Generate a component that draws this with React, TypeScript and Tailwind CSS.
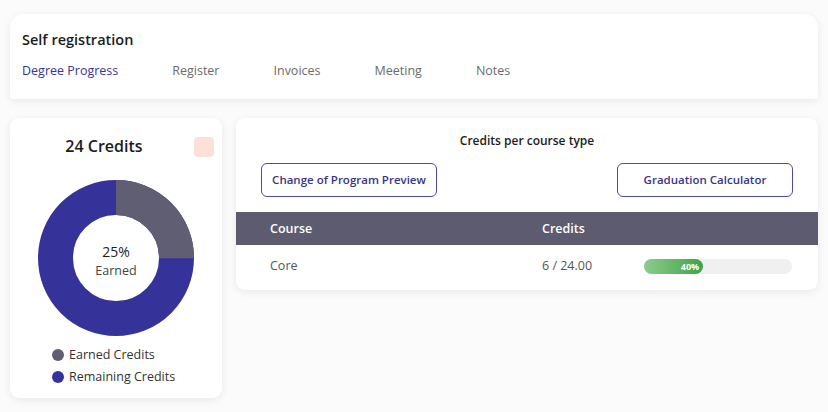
const TABS = ["Degree Progress", "Register", "Invoices", "Meeting", "Notes"];

function Donut() {
  const r = 60.5;
  const c = 2 * Math.PI * r;
  return (
    <svg width="156" height="156" viewBox="0 0 156 156">
      <g transform="rotate(-90 78 78)">
        <circle cx="78" cy="78" r={r} fill="none" stroke="#35329a" strokeWidth="35" />
        <circle
          cx="78"
          cy="78"
          r={r}
          fill="none"
          stroke="#5f5e73"
          strokeWidth="35"
          strokeDasharray={`${c * 0.25} ${c}`}
        />
      </g>
    </svg>
  );
}

export default function App() {
  return (
    <div
      className="w-[828px] h-[412px] bg-[#fbfbfb] px-[10px] pt-[14px] overflow-hidden text-[#222]"
      style={{ fontFamily: '"Open Sans", "Noto Sans", sans-serif' }}
    >
      {/* Header */}
      <div className="h-[85px] bg-white rounded-t-[14px] rounded-b-[3px] shadow-[0_2px_8px_rgba(0,0,0,0.08)] px-[12px] pt-[16px]">
        <h1 className="text-[14.5px] font-semibold leading-5 text-[#1c1c1c]">Self registration</h1>
        <div className="flex gap-[54px] mt-[13px] text-[12.5px] leading-4 text-[#6b6b6b]">
          {TABS.map((t, i) => (
            <span key={t} className={i === 0 ? "text-[#3b3590]" : ""}>
              {t}
            </span>
          ))}
        </div>
      </div>

      <div className="flex items-start gap-[14px] mt-[19px]">
        {/* Credits donut card */}
        <div className="w-[212px] h-[280px] bg-white rounded-[9px] shadow-[0_2px_8px_rgba(0,0,0,0.08)] flex flex-col items-center relative">
          <h2 className="mt-[16px] mr-[24px] text-[16px] font-semibold leading-6 text-[#1c1c1c]">24 Credits</h2>
          <span className="absolute right-[8px] top-[19px] size-[20px] rounded-[4px] bg-[#fde0d7]" />
          <div className="relative mt-[22px]">
            <Donut />
            <div className="absolute inset-0 pt-[6px] flex flex-col items-center justify-center gap-[3px] leading-tight">
              <span className="text-[14px] text-[#1c1c1c]">25%</span>
              <span className="text-[12.5px] text-[#444]">Earned</span>
            </div>
          </div>
          <div className="self-start mt-[10px] ml-[42px] flex flex-col gap-[3px] text-[12.5px] text-[#333]">
            <div className="flex items-center gap-[5px]">
              <span className="size-[12px] rounded-full bg-[#5f5e73]" />
              Earned Credits
            </div>
            <div className="flex items-center gap-[5px]">
              <span className="size-[12px] rounded-full bg-[#35329a]" />
              Remaining Credits
            </div>
          </div>
        </div>

        {/* Credits per course type */}
        <div className="flex-1 h-[172px] bg-white rounded-[9px] shadow-[0_2px_8px_rgba(0,0,0,0.08)] overflow-hidden">
          <p className="text-center text-[12px] font-semibold leading-4 pt-[15px] text-[#1c1c1c]">
            Credits per course type
          </p>
          <div className="flex justify-between px-[25px] mt-[14px]">
            <button className="w-[176px] h-[34px] rounded-[6px] border border-[#4f4b9e] text-[11.5px] font-semibold text-[#3a3488]">
              Change of Program Preview
            </button>
            <button className="w-[176px] h-[34px] rounded-[6px] border border-[#4f4b9e] text-[11.5px] font-semibold text-[#3a3488]">
              Graduation Calculator
            </button>
          </div>
          <div className="mt-[15px] h-[33px] pt-[2px] bg-[#5c5b70] flex items-center text-white text-[12.5px] font-semibold">
            <span className="w-[306px] pl-[34px]">Course</span>
            <span>Credits</span>
          </div>
          <div className="h-[41px] pt-[1px] flex items-center text-[12.5px] text-[#555]">
            <span className="w-[306px] pl-[34px]">Core</span>
            <span className="w-[102px]">6 / 24.00</span>
            <div className="w-[148px] h-[15px] rounded-full bg-[#f0f0f0]">
              <div className="w-[40%] h-full rounded-full bg-gradient-to-r from-[#8ccb8c] to-[#3aa447] flex items-center justify-end pr-[4px]">
                <span className="text-[9px] font-bold text-white leading-none">40%</span>
              </div>
            </div>
          </div>
        </div>
      </div>
    </div>
  );
}
